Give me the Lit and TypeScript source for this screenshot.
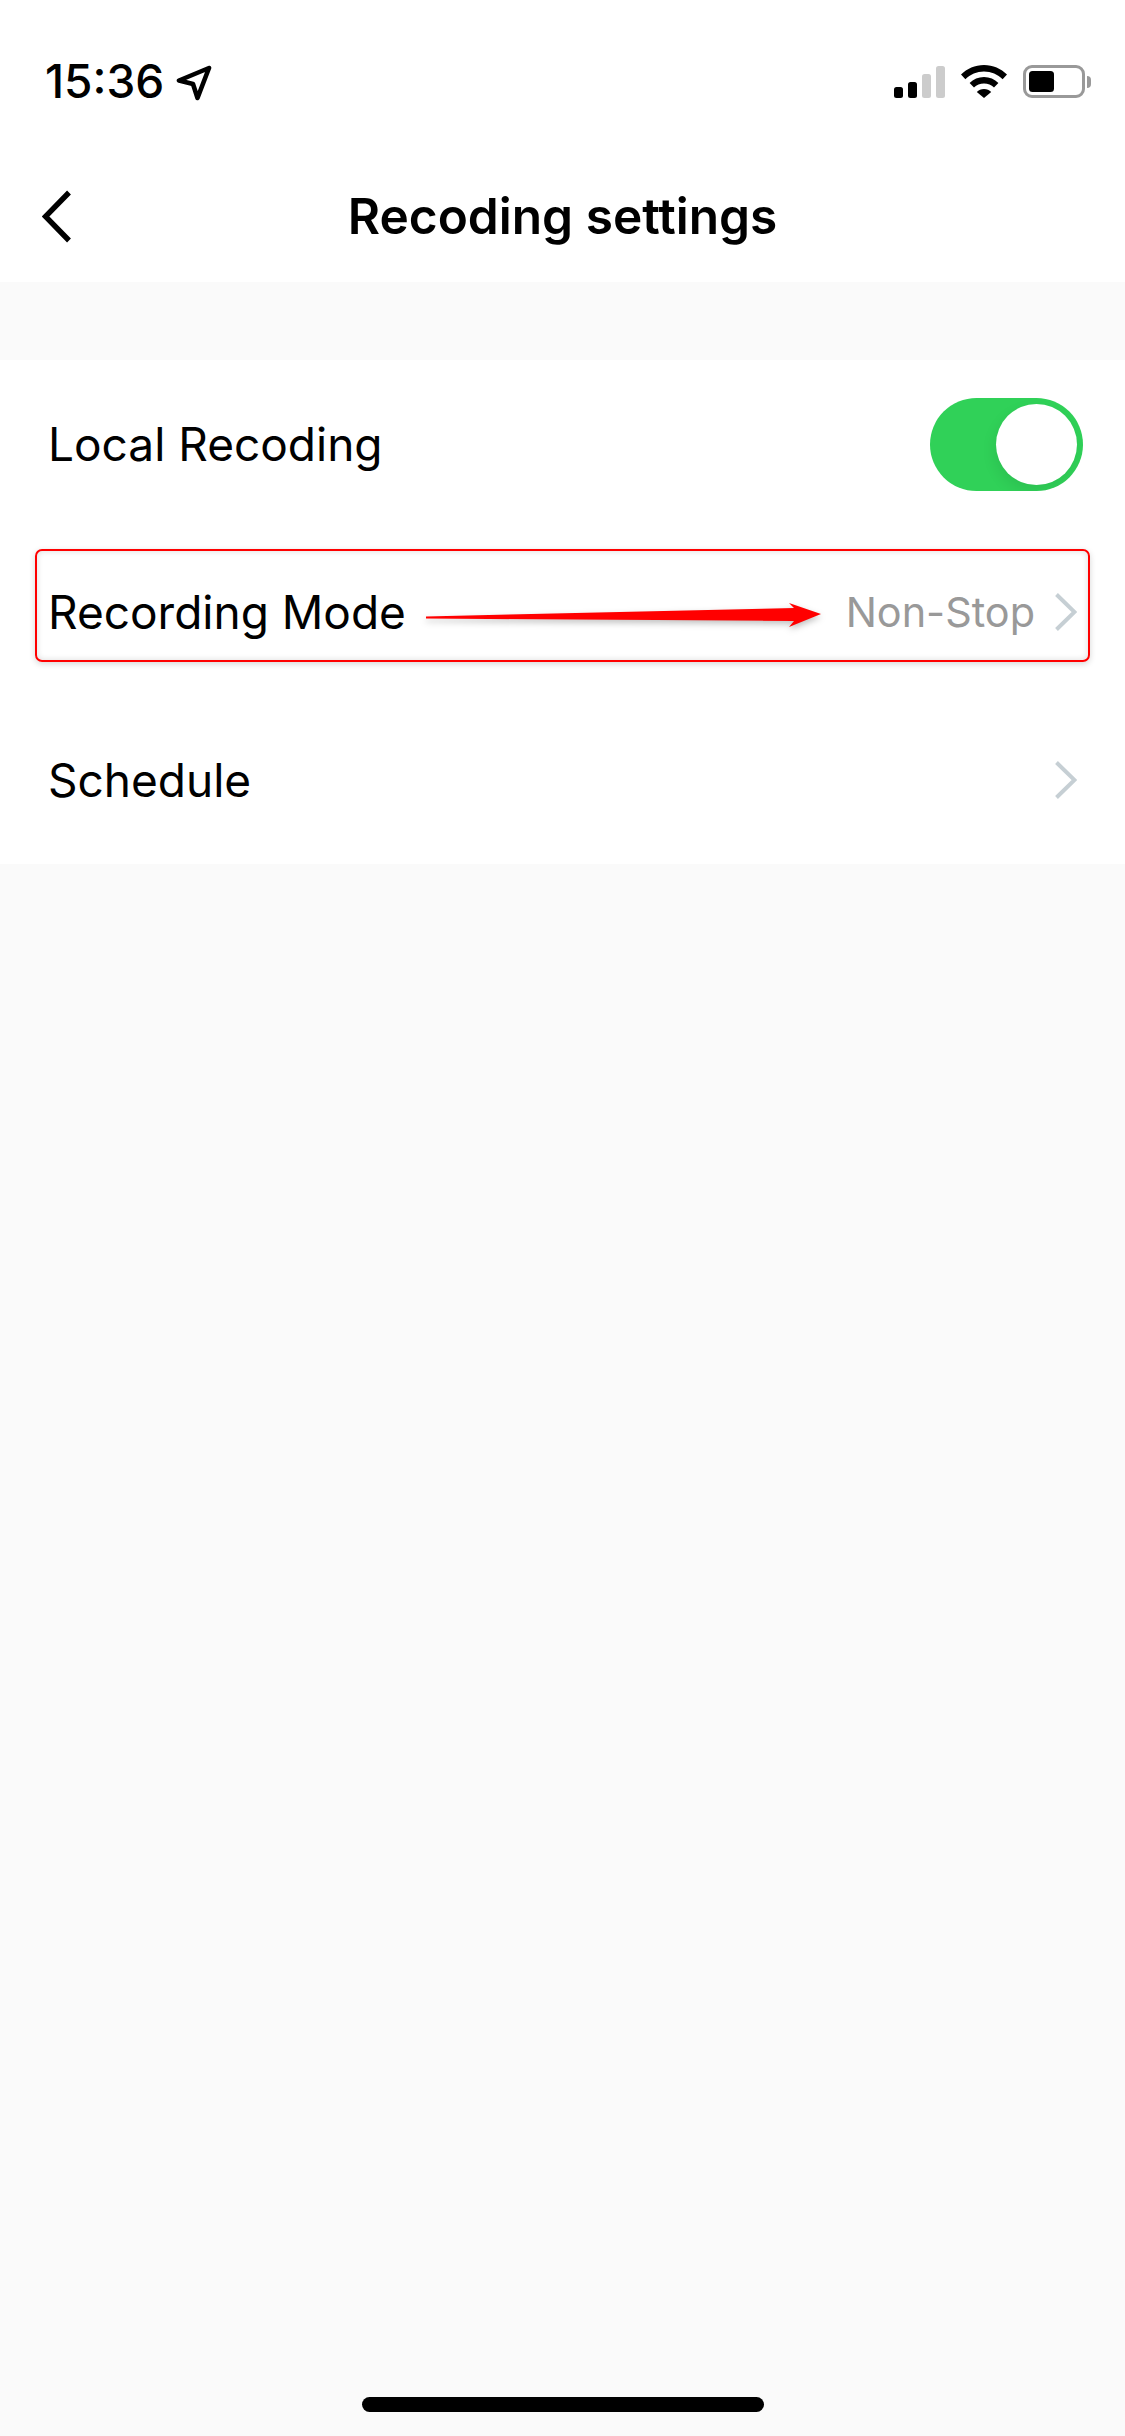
import { LitElement, css, html } from 'lit';
import { customElement } from 'lit/decorators.js';

const chevron = html`
  <svg class="chevron" viewBox="0 0 22 38" fill="none">
    <path d="M1.5 1.5 L19.5 19 L1.5 36.5" stroke="#c6cfd4" stroke-width="4" />
  </svg>
`;

@customElement('app-root')
export class AppRoot extends LitElement {
  render() {
    return html`
      <div class="page">
        <div class="status">
          <div class="time-wrap">
            <span class="time">15:36</span>
            <svg class="location" viewBox="0 0 36 36" fill="none">
              <path
                d="M33 3 L3 15.5 L17 19 L21.5 33 Z"
                stroke="#000"
                stroke-width="4.6"
                stroke-linejoin="round"
              />
            </svg>
          </div>
          <div class="status-icons">
            <div class="signal">
              <i class="bar on b1"></i>
              <i class="bar on b2"></i>
              <i class="bar b3"></i>
              <i class="bar b4"></i>
            </div>
            <svg class="wifi" viewBox="0 0 46 33">
              <path
                d="M23 0 C32 0 40 3.6 46 9.6 L41.6 14.2 C36.8 9.4 30.2 6.4 23 6.4 C15.8 6.4 9.2 9.4 4.4 14.2 L0 9.6 C6 3.6 14 0 23 0 Z"
              />
              <path
                d="M23 12 C28.6 12 33.6 14.2 37.4 18 L33 22.5 C30.4 19.9 26.9 18.4 23 18.4 C19.1 18.4 15.6 19.9 13 22.5 L8.6 18 C12.4 14.2 17.4 12 23 12 Z"
              />
              <path d="M23 24 C25.8 24 28.4 25.1 30.2 26.9 L23 33 L15.8 26.9 C17.6 25.1 20.2 24 23 24 Z" />
            </svg>
            <div class="battery">
              <div class="battery-body"><div class="battery-level"></div></div>
              <div class="battery-nub"></div>
            </div>
          </div>
        </div>

        <div class="nav">
          <svg class="back" viewBox="0 0 30 54" fill="none">
            <path d="M27 2.5 L3.5 26.5 L27 50.5" stroke="#000" stroke-width="5.4" />
          </svg>
          <div class="title">Recoding settings</div>
        </div>

        <div class="band"></div>

        <div class="list">
          <div class="row">
            <span class="label">Local Recoding</span>
            <div class="toggle"><div class="knob"></div></div>
          </div>
          <div class="row">
            <span class="label">Recording Mode</span>
            <div class="value-wrap">
              <span class="value">Non-Stop</span>
              ${chevron}
            </div>
            <div class="highlight"></div>
            <svg class="arrow" viewBox="0 0 420 40">
              <path d="M6 21.5 L374 13 L369 8 L401 19 L369 32 L374 26 L6 23.5 Z" fill="#ff0000" />
            </svg>
          </div>
          <div class="row">
            <span class="label">Schedule</span>
            <div class="value-wrap">${chevron}</div>
          </div>
        </div>

        <div class="fill"></div>
        <div class="home"></div>
      </div>
    `;
  }

  static styles = css`
    :host {
      display: block;
    }

    .page {
      display: flex;
      flex-direction: column;
      height: 2436px;
      background-color: #fafafa;
      font-family: Inter, 'Liberation Sans', sans-serif;
      color: #000;
      overflow: hidden;
    }

    .status {
      display: flex;
      justify-content: space-between;
      height: 152px;
      padding: 65px 34px 0 45px;
      box-sizing: border-box;
      background-color: #fff;
    }

    .time-wrap {
      display: flex;
      align-items: flex-start;
      gap: 12px;
    }

    .time {
      font-size: 46px;
      font-weight: 500;
      line-height: 33px;
    }

    .location {
      width: 36px;
      height: 36px;
    }

    .status-icons {
      display: flex;
      align-items: flex-start;
      gap: 16px;
    }

    .signal {
      display: flex;
      align-items: flex-end;
      gap: 5px;
      height: 33px;
    }

    .bar {
      display: block;
      width: 9px;
      border-radius: 2.5px;
      background-color: #ccc;
    }

    .bar.on {
      background-color: #000;
    }

    .b1 {
      height: 11px;
    }

    .b2 {
      height: 16px;
    }

    .b3 {
      height: 24px;
    }

    .b4 {
      height: 32px;
    }

    .wifi {
      width: 46px;
      height: 33px;
    }

    .battery {
      display: flex;
      align-items: center;
      gap: 2px;
      height: 33px;
    }

    .battery-body {
      width: 62px;
      height: 33px;
      padding: 3px;
      box-sizing: border-box;
      border: 3px solid #999;
      border-radius: 9px;
    }

    .battery-level {
      width: 25px;
      height: 100%;
      border-radius: 3.5px;
      background-color: #000;
    }

    .battery-nub {
      width: 4px;
      height: 12px;
      border-radius: 0 6px 6px 0;
      background-color: #999;
    }

    .nav {
      position: relative;
      display: flex;
      align-items: center;
      justify-content: center;
      height: 130px;
      background-color: #fff;
    }

    .back {
      position: absolute;
      left: 42px;
      top: 38px;
      width: 30px;
      height: 54px;
    }

    .title {
      padding-bottom: 2px;
      font-size: 49.6px;
      font-weight: 600;
    }

    .band {
      height: 78px;
    }

    .list {
      display: flex;
      flex-direction: column;
      background-color: #fff;
    }

    .row {
      position: relative;
      display: flex;
      align-items: center;
      justify-content: space-between;
      height: 168px;
      padding: 0 48px;
    }

    .label {
      font-size: 46px;
      font-weight: 400;
    }

    .value-wrap {
      display: flex;
      align-items: center;
      gap: 20px;
    }

    .value {
      font-size: 41.4px;
      color: #999;
    }

    .chevron {
      width: 22px;
      height: 38px;
    }

    .toggle {
      display: flex;
      justify-content: flex-end;
      align-items: center;
      width: 153px;
      height: 93px;
      margin-right: -6px;
      padding: 0 6px;
      box-sizing: border-box;
      border-radius: 47px;
      background-color: #30d158;
      overflow: hidden;
    }

    .knob {
      width: 81px;
      height: 81px;
      border-radius: 50%;
      background-color: #fff;
      box-shadow: -2px 6px 14px rgba(0, 0, 0, 0.08);
    }

    .highlight {
      position: absolute;
      left: 35px;
      top: 21px;
      width: 1055px;
      height: 113px;
      box-sizing: border-box;
      border: 2px solid #ff0000;
      border-radius: 7px;
      box-shadow:
        0 2px 6px rgba(0, 0, 0, 0.16),
        inset 0 0 6px rgba(0, 0, 0, 0.14);
    }

    .arrow {
      position: absolute;
      left: 420px;
      top: 67px;
      width: 420px;
      height: 40px;
      filter: drop-shadow(0 3px 3px rgba(0, 0, 0, 0.25));
    }

    .fill {
      flex: 1;
    }

    .home {
      align-self: center;
      width: 402px;
      height: 15px;
      margin-bottom: 24px;
      border-radius: 8px;
      background-color: #000;
    }
  `;
}
